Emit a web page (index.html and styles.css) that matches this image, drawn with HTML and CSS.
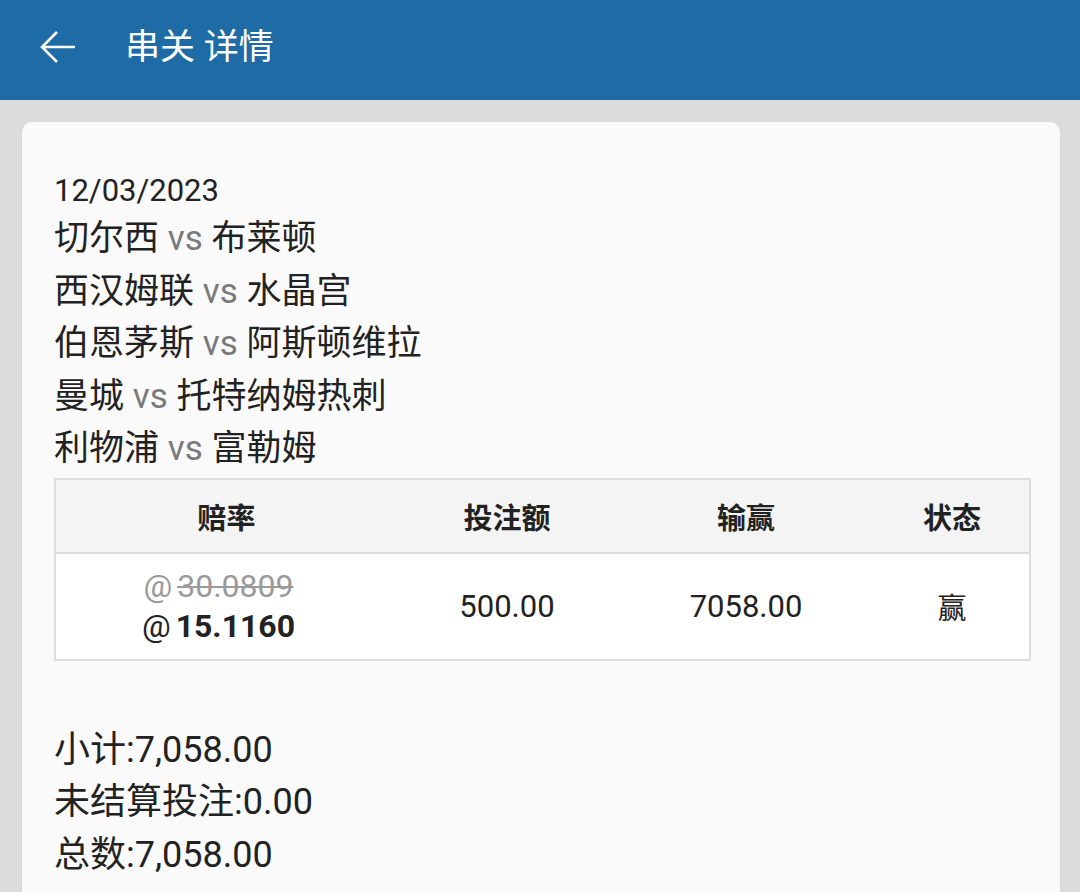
FILE: index.html
```html
<!DOCTYPE html>
<html lang="zh-CN">
<head>
<meta charset="utf-8">
<title>串关 详情</title>
<link rel="stylesheet" href="styles.css">
</head>
<body>
<header class="appbar">
  <svg class="back" width="36" height="34" viewBox="0 0 36 34" aria-hidden="true">
    <path d="M2 17H35M17 2L2 17L17 32" fill="none" stroke="#ffffff" stroke-width="2.6" stroke-linecap="butt" stroke-linejoin="miter"/>
  </svg>
  <h1 class="title">串关 详情</h1>
</header>
<main class="card">
  <div class="date">12/03/2023</div>
  <ul class="matches">
    <li>切尔西 <span class="vs">vs</span> 布莱顿</li>
    <li>西汉姆联 <span class="vs">vs</span> 水晶宫</li>
    <li>伯恩茅斯 <span class="vs">vs</span> 阿斯顿维拉</li>
    <li>曼城 <span class="vs">vs</span> 托特纳姆热刺</li>
    <li>利物浦 <span class="vs">vs</span> 富勒姆</li>
  </ul>
  <table class="bets">
    <colgroup>
      <col class="c1"><col class="c2"><col class="c3"><col class="c4">
    </colgroup>
    <thead>
      <tr><th>赔率</th><th>投注额</th><th>输赢</th><th>状态</th></tr>
    </thead>
    <tbody>
      <tr>
        <td>
          <div class="odds-old"><span class="at">@</span><del>30.0809</del></div>
          <div class="odds-new"><span class="at">@</span><strong>15.1160</strong></div>
        </td>
        <td>500.00</td>
        <td>7058.00</td>
        <td class="status">赢</td>
      </tr>
    </tbody>
  </table>
  <div class="summary">
    <div>小计:7,058.00</div>
    <div>未结算投注:0.00</div>
    <div>总数:7,058.00</div>
  </div>
</main>
</body>
</html>
```

FILE: styles.css
```css
html, body {
  margin: 0;
  padding: 0;
}
body {
  background: #dcdcdc;
  font-family: Roboto, "Noto Sans CJK SC", sans-serif;
  color: #222222;
  width: 1080px;
  height: 892px;
  overflow: hidden;
}
.appbar {
  height: 100px;
  background: #1f6ba6;
  display: flex;
  align-items: center;
  padding-left: 40px;
  box-sizing: border-box;
}
.back {
  display: block;
  margin-top: -6px;
}
.title {
  margin: -6px 0 0 49px;
  font-size: 35px;
  font-weight: 400;
  color: #ffffff;
  line-height: 1;
}
.card {
  display: block;
  margin: 22px 20px 0 22px;
  background: #fafafa;
  border-radius: 10px 10px 0 0;
  padding: 46px 31px 0 32px;
  height: 724px;
  overflow: hidden;
  box-shadow: 0 1px 2px rgba(0,0,0,0.08);
}
.date {
  font-size: 31px;
  line-height: 45px;
}
.matches {
  list-style: none;
  margin: 0;
  padding: 0;
}
.matches li {
  font-size: 35px;
  line-height: 52.5px;
}
.vs {
  color: #7a7a7a;
}
.bets {
  margin-top: 2px;
  width: 100%;
  border-collapse: collapse;
  table-layout: fixed;
  border: 2px solid #dedede;
  background: #ffffff;
}
.c1 { width: 342px; }
.c2 { width: 220px; }
.c3 { width: 258px; }
.c4 { width: 155px; }
.bets th {
  background: #f4f4f4;
  height: 72px;
  font-size: 29px;
  font-weight: 700;
  border-bottom: 2px solid #dedede;
  padding: 0;
  text-align: center;
  color: #222222;
}
.bets td {
  height: 105px;
  padding: 0;
  text-align: center;
  font-size: 31px;
  color: #222222;
}
.odds-old, .odds-new {
  display: flex;
  justify-content: center;
  align-items: baseline;
  gap: 5px;
  line-height: 40px;
  font-size: 32px;
  padding-right: 16px;
}
.odds-old {
  color: #9a9a9a;
}
.odds-old del {
  text-decoration-thickness: 2px;
}
.odds-new strong {
  font-weight: 700;
}
.bets td.status {
  font-size: 29px;
}
.summary {
  margin-top: 63px;
}
.summary div {
  font-size: 36px;
  line-height: 52.5px;
}
```
